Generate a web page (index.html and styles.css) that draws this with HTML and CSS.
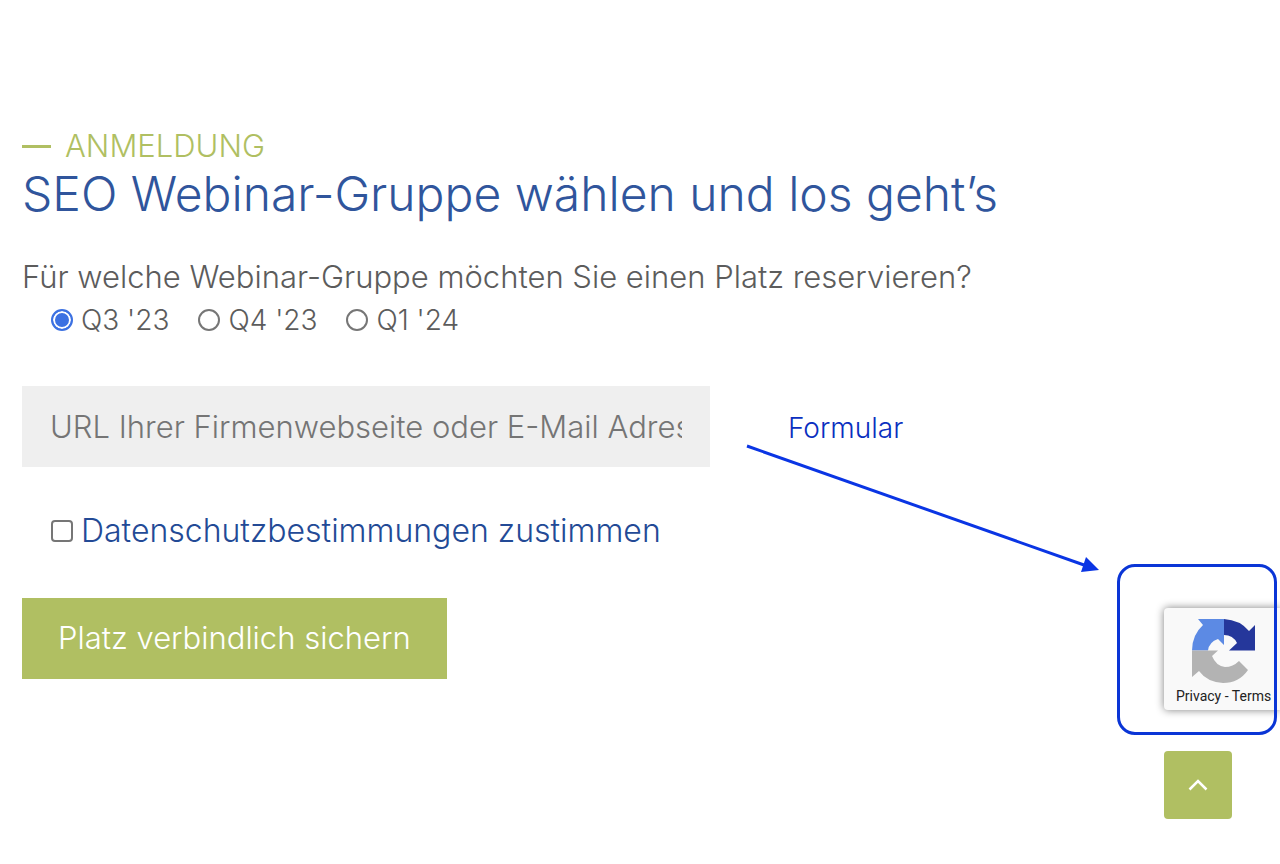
FILE: index.html
```html
<!DOCTYPE html>
<html lang="de">
<head>
<meta charset="utf-8">
<meta name="viewport" content="width=device-width, initial-scale=1">
<title>SEO Webinar Anmeldung</title>
<link rel="stylesheet" href="styles.css">
</head>
<body>
<main class="page">
  <header class="intro">
    <p class="eyebrow"><span class="dash"></span>ANMELDUNG</p>
    <h1 class="title">SEO Webinar-Gruppe wählen und los geht’s</h1>
  </header>
  <form class="form">
    <fieldset class="group">
      <legend class="question">Für welche Webinar-Gruppe möchten Sie einen Platz reservieren?</legend>
      <div class="choices">
        <label class="choice"><input class="radio" type="radio" name="quarter" checked>Q3 '23</label>
        <label class="choice"><input class="radio" type="radio" name="quarter">Q4 '23</label>
        <label class="choice"><input class="radio" type="radio" name="quarter">Q1 '24</label>
      </div>
    </fieldset>
    <input class="field" type="text" aria-label="URL oder E-Mail Adresse" placeholder="URL Ihrer Firmenwebseite oder E-Mail Adresse">
    <div class="consent">
      <input class="check" type="checkbox" id="consent">
      <label for="consent"><a class="link" href="#">Datenschutzbestimmungen zustimmen</a></label>
    </div>
    <button class="submit" type="button">Platz verbindlich sichern</button>
  </form>
</main>

<aside class="badge">
  <svg class="badge-logo" viewBox="0 0 64 64" aria-hidden="true">
    <path fill="#5c8ae4" d="M6 0H32V26L26 20Q17 23 16 31.500H0Q0 16 11 6Z"/>
    <path fill="#25379b" d="M32 0Q48 1 57 12L63 6V31.500H37L45 24Q41 16 32 16Z"/>
    <path fill="#b3b3b3" d="M0 31.500H26L20 37Q24 47 33 48Q41 48 47 42L56 51Q47 64 31 64Q15 63 7 52L0 58Z"/>
  </svg>
  <p class="badge-links"><a href="#">Privacy</a> - <a href="#">Terms</a></p>
</aside>
<button class="to-top" type="button" aria-label="Nach oben">
  <svg class="chevron" viewBox="0 0 20 12" aria-hidden="true"><path d="M1.500 10.500L10 2L18.500 10.500" fill="none" stroke="#fff" stroke-width="2.500"/></svg>
</button>

<span class="note">Formular</span>
<svg class="arrow" viewBox="0 0 354 130" aria-hidden="true">
  <path d="M1 2L338 121" stroke="#0a35e4" stroke-width="3"/>
  <path d="M340 113L353 126L335 128Z" fill="#0a35e4"/>
</svg>
<div class="frame"></div>
</body>
</html>
```
FILE: styles.css
```css
* { box-sizing: border-box; }
body {
  position: relative;
  margin: 0;
  min-height: 100vh;
  overflow-x: hidden;
  background: #fff;
  color: #5c5c5c;
  font: 300 31px/40px Inter, "Open Sans", sans-serif;
}
.page { padding: 126px 22px 40px; }
.eyebrow {
  display: flex;
  align-items: center;
  gap: 14px;
  margin: 0;
  color: #b0bf62;
}
.dash { width: 29px; height: 3px; background: #b0bf62; }
.title {
  margin: 0;
  color: #30559c;
  font-size: 48px;
  font-weight: 300;
  line-height: 56px;
}
.form {
  display: flex;
  flex-direction: column;
  align-items: flex-start;
  margin-top: 35px;
}
.group { margin: 0; padding: 0; border: 0; }
.question { padding: 0; }
.choices {
  display: flex;
  flex-wrap: wrap;
  gap: 28px;
  padding: 3px 28px 0;
  font-size: 28px;
}
.choice { display: flex; align-items: center; }
.radio, .check {
  appearance: none;
  flex: none;
  width: 22px;
  height: 22px;
  margin: 0 8px 0 1px;
  border: 2px solid #767676;
  background: #fff;
}
.radio { border-radius: 50%; }
.radio:checked { border-color: #3c71e2; background: #3c71e2; box-shadow: inset 0 0 0 2px #fff; }
.field {
  width: 100%;
  max-width: 688px;
  height: 81px;
  margin: 46px 0 44px;
  padding: 0 28px;
  border: 0;
  border-radius: 0;
  background: #efefef;
  color: #5c5c5c;
  font: inherit;
}
.field::placeholder { color: #757575; opacity: 1; }
.consent { display: flex; align-items: center; padding-left: 28px; font-size: 32px; }
.check { border-radius: 4px; }
.link { color: #234a96; text-decoration: none; }
.submit {
  margin-top: 47px;
  padding: 20px 36px 21px;
  border: 0;
  background: #b0bf62;
  color: #fff;
  font: inherit;
}
.badge {
  position: absolute;
  top: 608px;
  right: 0;
  width: 116px;
  height: 102px;
  padding: 11px 0 0 12px;
  border-radius: 4px 0 0 4px;
  background: #f9f9f9;
  box-shadow: 0 0 8px #808080;
  color: #222;
  font: 400 14px/20px Roboto, sans-serif;
}
.badge-logo { display: block; width: 64px; height: 64px; margin-left: 16px; }
.badge-links { margin: 3px 0 0; white-space: nowrap; }
.badge-links a { color: inherit; text-decoration: none; }
.to-top {
  position: absolute;
  top: 751px;
  right: 48px;
  display: grid;
  place-items: center;
  width: 68px;
  height: 68px;
  padding: 0;
  border: 0;
  border-radius: 4px;
  background: #b0bf62;
}
.chevron { width: 20px; height: 12px; }
.note {
  position: absolute;
  top: 408px;
  left: 788px;
  color: #0a2fc0;
  font-size: 28px;
}
.arrow { position: absolute; top: 444px; left: 746px; width: 354px; height: 130px; }
.frame {
  position: absolute;
  top: 564px;
  right: 3px;
  width: 160px;
  height: 171px;
  border: 3px solid #0a35d6;
  border-radius: 18px;
  pointer-events: none;
}
```
